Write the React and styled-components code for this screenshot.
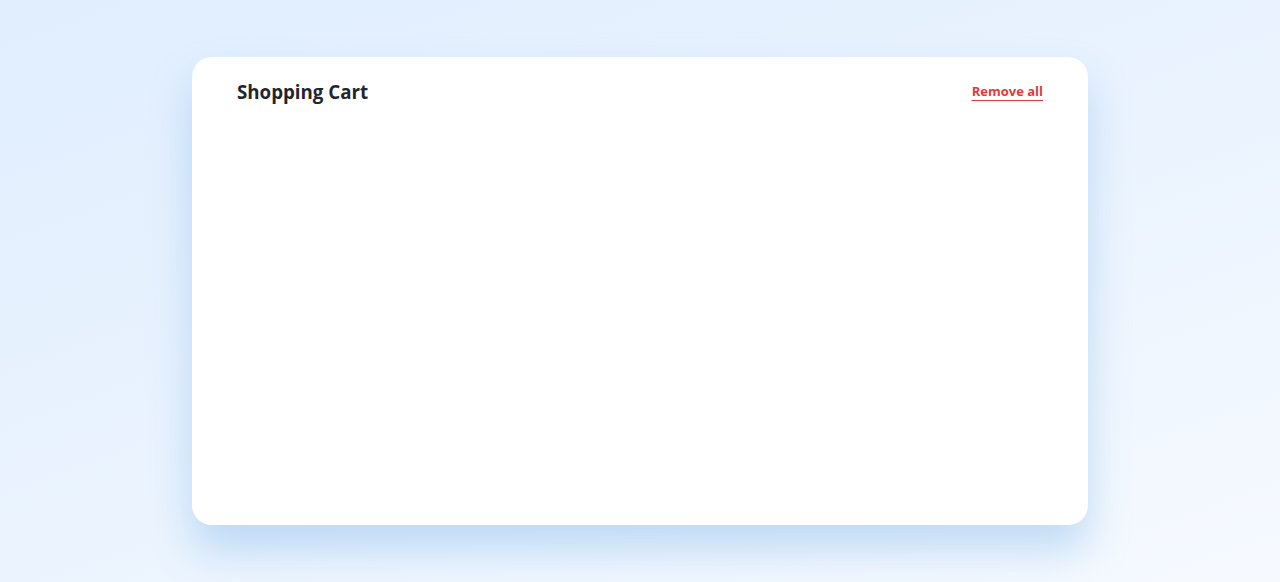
import React from 'react';
import styled, { createGlobalStyle } from 'styled-components';

const GlobalStyle = createGlobalStyle`
  html, body, #root {
    margin: 0;
    height: 100%;
  }
  body {
    font-family: "Open Sans", "Liberation Sans", sans-serif;
    background: linear-gradient(160deg, #e0eefe 0%, #eaf3fe 50%, #f6faff 100%);
  }
`;

const Page = styled.main`
  height: 100%;
  display: flex;
  align-items: center;
  justify-content: center;
`;

const Card = styled.section`
  width: 896px;
  height: 468px;
  box-sizing: border-box;
  padding: 18px 45px;
  background: #ffffff;
  border-radius: 20px;
  box-shadow: 0 25px 40px rgba(130, 185, 235, 0.45);
`;

const Header = styled.header`
  display: flex;
  align-items: center;
  justify-content: space-between;
  height: 32px;
`;

const Title = styled.h3`
  margin: 0;
  font-size: 1.17em;
  font-weight: 700;
  color: #1f262e;
`;

const RemoveAll = styled.button`
  border: none;
  background: none;
  padding: 0;
  font-family: inherit;
  font-size: 13px;
  font-weight: 700;
  color: #e03a3a;
  text-decoration: underline;
  text-underline-offset: 4px;
  cursor: pointer;
`;

export default function App() {
  return (
    <>
      <GlobalStyle />
      <Page>
        <Card>
          <Header>
            <Title>Shopping Cart</Title>
            <RemoveAll>Remove all</RemoveAll>
          </Header>
        </Card>
      </Page>
    </>
  );
}
